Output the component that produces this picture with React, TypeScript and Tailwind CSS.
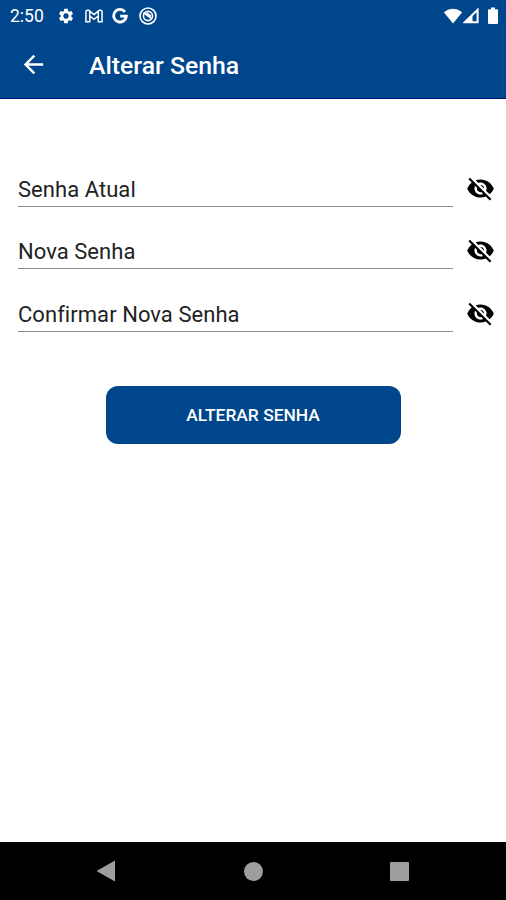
import React from 'react';
import { MdArrowBack, MdSettings, MdVisibilityOff } from 'react-icons/md';

const fields = ['Senha Atual', 'Nova Senha', 'Confirmar Nova Senha'];

function StatusBar() {
  return (
    <div className="flex h-8 items-center justify-between pl-[10px] pr-[7px] text-white">
      <div className="flex items-center">
        <span className="w-[47px] text-[17.5px] leading-8">2:50</span>
        <MdSettings className="h-[18px] w-[18px]" />
        <svg className="ml-[10px] h-[14px] w-[18px]" viewBox="0 0 19 14" fill="none" stroke="currentColor" strokeWidth="1.6">
          <path d="M1 2.5 Q1 1 2.5 1 L4 1 L9.5 5.5 L15 1 L16.5 1 Q18 1 18 2.5 V13 H14 V7 L9.5 10.5 L5 7 V13 H1 Z M5 7 V2 M14 7 V2" />
        </svg>
        <svg className="ml-[9px] h-4 w-4" viewBox="0 0 16 16" fill="none" stroke="currentColor" strokeWidth="2.8">
          <path d="M13 3.9 A6.3 6.3 0 1 0 14.3 8.2 H8.2" />
        </svg>
        <svg className="ml-[11px] h-[18px] w-[18px]" viewBox="0 0 18 18" fill="none" stroke="currentColor">
          <circle cx="9" cy="9" r="8" strokeWidth="1.6" />
          <circle cx="9" cy="9" r="4.6" strokeWidth="1.6" />
          <path d="M4.5 5.5 L12.5 11.5 M7.5 6 L12 9.2" strokeWidth="1.7" />
        </svg>
      </div>
      <div className="flex items-center">
        <svg className="h-4 w-5" viewBox="0 0 20 16" fill="currentColor">
          <path d="M.8 4.2 Q10 -2.6 19.2 4.2 L10 15.4 Z" />
        </svg>
        <svg className="h-4 w-4" viewBox="0 0 16 16" fill="none" stroke="currentColor">
          <path d="M1.8 14.2 L14.6 1.8 V14.2 Z" strokeWidth="2" />
          <path d="M9.5 7 V14 H2.5 Z" fill="currentColor" stroke="none" />
        </svg>
        <svg className="ml-[8px] h-[18px] w-3" viewBox="0 0 12 18" fill="currentColor">
          <path d="M4 .5 H8 V2.3 H10 Q11 2.3 11 3.3 V16 Q11 17 10 17 H2 Q1 17 1 16 V3.3 Q1 2.3 2 2.3 H4 Z" />
        </svg>
      </div>
    </div>
  );
}

function PasswordField({ label }: { label: string }) {
  return (
    <div className="flex h-[62.5px] pl-[18px] pr-[11px]">
      <div className="h-[35px] w-[435px] border-b border-[#8c8c8c]">
        <span className="text-[22px] leading-[35px] tracking-[0.05px] text-[#222]">{label}</span>
      </div>
      <button className="ml-[13px] mt-[2px] h-[29px] w-[29px] text-black" aria-label="Mostrar senha">
        <MdVisibilityOff className="h-[29px] w-[29px]" />
      </button>
    </div>
  );
}

function NavigationBar() {
  return (
    <div className="flex h-[58px] items-center bg-black pl-[96px] text-[#9e9e9e]">
      <svg className="h-[22px] w-[19px]" viewBox="0 0 19 22" fill="currentColor">
        <path d="M.5 11 L19 .5 V21.5 Z" />
      </svg>
      <div className="ml-[129px] h-[19px] w-[19px] rounded-full bg-[#9e9e9e]" />
      <div className="ml-[127px] h-[19px] w-[19px] rounded-[1px] bg-[#9e9e9e]" />
    </div>
  );
}

export default function App() {
  return (
    <div className="flex h-[900px] w-[506px] flex-col bg-white font-['Roboto',sans-serif]">
      <header className="h-[99px] border-b border-[#00107a] bg-[#00468c]">
        <StatusBar />
        <div className="flex h-[66px] items-center pl-[19px] text-white">
          <MdArrowBack className="mb-[2px] h-[29px] w-[29px]" />
          <h1 className="ml-[41px] mt-[2px] text-[24.8px] font-medium">Alterar Senha</h1>
        </div>
      </header>

      <main className="flex-1 pt-[72.9px]">
        {fields.map((label) => (
          <PasswordField key={label} label={label} />
        ))}
        <button className="mx-auto mt-[26.6px] block h-[58px] w-[295px] rounded-[12px] bg-[#00468c] pt-px text-[17.4px] font-medium text-white">
          ALTERAR SENHA
        </button>
      </main>

      <NavigationBar />
    </div>
  );
}
